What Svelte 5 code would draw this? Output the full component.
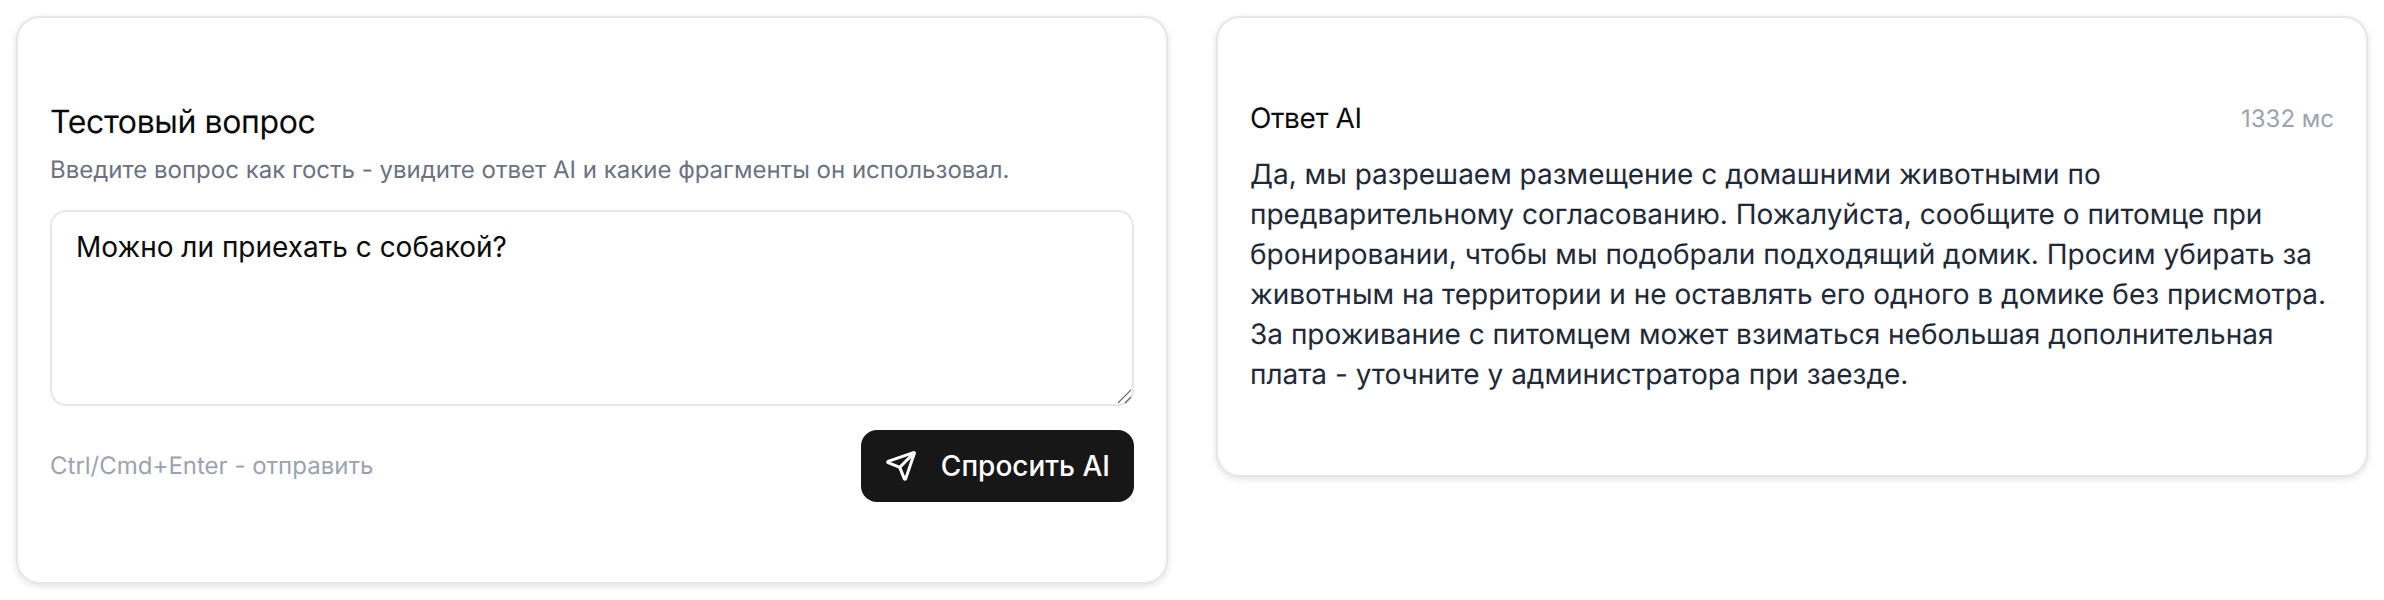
<script>
  let question = $state("Можно ли приехать с собакой?");
  const answer = "Да, мы разрешаем размещение с домашними животными по предварительному согласованию. Пожалуйста, сообщите о питомце при бронировании, чтобы мы подобрали подходящий домик. Просим убирать за животным на территории и не оставлять его одного в домике без присмотра. За проживание с питомцем может взиматься небольшая дополнительная плата - уточните у администратора при заезде.";
</script>

<main class="page">
  <section class="card ask">
    <h2>Тестовый вопрос</h2>
    <p class="hint">Введите вопрос как гость - увидите ответ AI и какие фрагменты он использовал.</p>
    <div class="field">
      <textarea bind:value={question}></textarea>
      <svg class="grip" viewBox="0 0 16 16" width="16" height="16" fill="none" stroke-width="1.3">
        <path d="M2 15 15 2" stroke="#666" />
        <path d="M3 16 16 3" stroke="#fff" />
        <path d="M9 15 15 9" stroke="#666" />
      </svg>
    </div>
    <div class="actions">
      <span class="shortcut">Ctrl/Cmd+Enter - отправить</span>
      <button type="button">
        <svg viewBox="0 0 24 24" width="32" height="32" fill="none" stroke="currentColor" stroke-width="2.25" stroke-linecap="round" stroke-linejoin="round">
          <path d="M14.536 21.686a.5.5 0 0 0 .937-.024l6.5-19a.496.496 0 0 0-.635-.635l-19 6.5a.5.5 0 0 0-.024.937l7.93 3.18a2 2 0 0 1 1.112 1.11z" />
          <path d="m21.854 2.147-10.94 10.939" />
        </svg>
        Спросить AI
      </button>
    </div>
  </section>
  <section class="card reply">
    <div class="reply-head">
      <h3>Ответ AI</h3>
      <span class="ms">1332 мс</span>
    </div>
    <p class="answer">{answer}</p>
  </section>
</main>

<style>
  :global(body) {
    background: #fff;
    font-family: Inter, "Noto Sans", sans-serif;
    text-rendering: geometricPrecision;
  }
  .page {
    display: grid;
    grid-template-columns: 1fr 1fr;
    gap: 48px;
    align-items: start;
    padding: 16px;
  }
  .card {
    background: #fff;
    border: 2px solid #e5e7eb;
    border-radius: 24px;
    box-shadow: 0 2px 6px rgba(0, 0, 0, 0.12);
  }
  .ask {
    padding: 84px 32px 80px;
  }
  .reply {
    padding: 82px 32px 81px;
  }
  h2 {
    margin: 0;
    font-size: 32px;
    line-height: 40px;
    font-weight: 400;
    letter-spacing: -0.4px;
    color: #0a0a0a;
  }
  .hint {
    margin: 12px 0 0;
    font-size: 24px;
    line-height: 32px;
    color: #6b7280;
  }
  .field {
    position: relative;
    margin-top: 24px;
  }
  textarea {
    display: block;
    box-sizing: border-box;
    width: 100%;
    height: 196px;
    padding: 15px 24px;
    border: 2px solid #e5e7eb;
    border-radius: 16px;
    font: inherit;
    font-size: 28px;
    line-height: 40px;
    color: #0a0a0a;
    outline: none;
    resize: none;
  }
  .grip {
    position: absolute;
    right: 2px;
    bottom: 2px;
    pointer-events: none;
  }
  .actions {
    display: flex;
    justify-content: space-between;
    align-items: center;
    margin-top: 24px;
  }
  .shortcut {
    padding-bottom: 2px;
    font-size: 24px;
    color: #9ca3af;
  }
  button {
    display: flex;
    align-items: center;
    gap: 24px;
    height: 72px;
    padding: 0 24px;
    border: 0;
    border-radius: 16px;
    background: #171717;
    color: #fff;
    font: inherit;
    font-size: 28px;
    font-weight: 500;
  }
  .reply-head {
    display: flex;
    justify-content: space-between;
    align-items: center;
  }
  h3 {
    margin: 0;
    font-size: 28px;
    line-height: 36px;
    font-weight: 400;
    letter-spacing: -0.4px;
    color: #0a0a0a;
  }
  .ms {
    font-size: 24px;
    color: #9ca3af;
  }
  .answer {
    margin: 18px 0 0;
    font-size: 28px;
    line-height: 40px;
    color: #1f2937;
  }
</style>
